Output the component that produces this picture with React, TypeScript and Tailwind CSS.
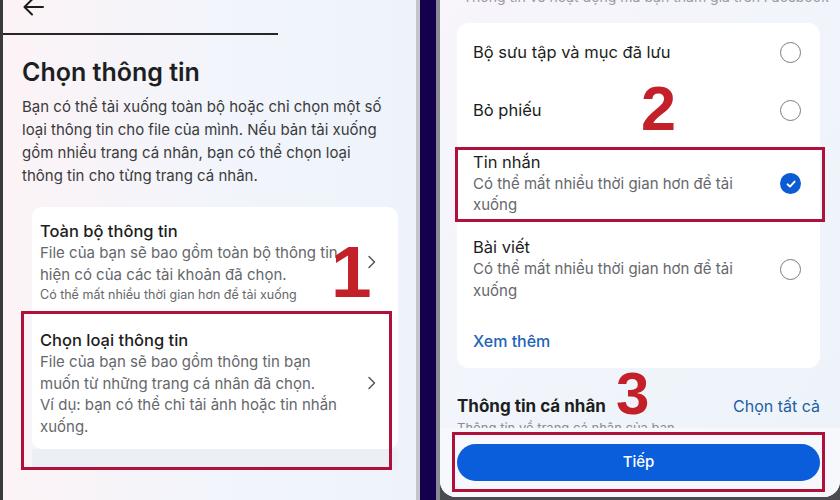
import React from "react";

const Radio = ({ checked }: { checked?: boolean }) =>
  checked ? (
    <div className="flex h-[21px] w-[21px] shrink-0 items-center justify-center rounded-full bg-[#0b5bd3]">
      <svg width="12" height="12" viewBox="0 0 12 12" fill="none">
        <path d="M2.5 6.3 L5 8.6 L9.6 3.6" stroke="white" strokeWidth="1.9" strokeLinecap="round" strokeLinejoin="round" />
      </svg>
    </div>
  ) : (
    <div className="h-[21px] w-[21px] shrink-0 rounded-full border-[1.6px] border-[#7c7c7c] bg-white" />
  );

const Chevron = () => (
  <svg width="10" height="16" viewBox="0 0 10 16" fill="none" className="shrink-0">
    <path d="M2 2.5 L7.5 8 L2 13.5" stroke="#555" strokeWidth="1.5" strokeLinecap="round" strokeLinejoin="round" />
  </svg>
);

function LeftScreen() {
  return (
    <div className="flex h-[500px] w-[420px] shrink-0 flex-col border-l-[3px] border-r-4 border-l-[#3a3a3a] border-r-[#c3c5cc] bg-gradient-to-r from-[#fcf3f6] via-[#f2f5fb] to-[#eef3fb]">
      <div className="h-[33px] pl-[18px]">
        <svg width="24" height="22" viewBox="0 0 24 22" fill="none" className="-mt-[4px]">
          <path d="M22 11 H4 M11 3.5 L3.5 11 L11 18.5" stroke="#1c1c1c" strokeWidth="2" strokeLinecap="round" strokeLinejoin="round" />
        </svg>
      </div>
      <div className="h-[2px] w-[275px] bg-[#262626]" />

      <h1 className="mt-[22px] pl-[19px] text-[25px] font-semibold leading-[30px] text-[#1c1e21]">Chọn thông tin</h1>
      <p className="mt-[8px] pl-[19px] text-[15px] leading-[23px] text-[#3a3b3c]">
        Bạn có thể tải xuống toàn bộ hoặc chỉ chọn một số
        <br />
        loại thông tin cho file của mình. Nếu bản tải xuống
        <br />
        gồm nhiều trang cá nhân, bạn có thể chọn loại
        <br />
        thông tin cho từng trang cá nhân.
      </p>

      <div className="ml-[29px] mt-[20px] w-[366px] rounded-[10px] bg-white px-[8px] pb-[12px] pt-[13px]">
        <div className="flex items-center justify-between pr-[13px]">
          <div>
            <div className="text-[16.5px] font-medium leading-[22px] text-[#1c1e21]">Toàn bộ thông tin</div>
            <div className="text-[15px] leading-[22px] text-[#65676b]">
              File của bạn sẽ bao gồm toàn bộ thông tin
              <br />
              hiện có của các tài khoản đã chọn.
            </div>
            <div className="text-[12.5px] leading-[18px] text-[#65676b]">Có thể mất nhiều thời gian hơn để tải xuống</div>
          </div>
          <Chevron />
        </div>
        <div className="mt-[25px] flex items-center justify-between pr-[13px]">
          <div>
            <div className="text-[16.5px] font-medium leading-[22px] text-[#1c1e21]">Chọn loại thông tin</div>
            <div className="text-[15px] leading-[21.5px] text-[#65676b]">
              File của bạn sẽ bao gồm thông tin bạn
              <br />
              muốn từ những trang cá nhân đã chọn.
              <br />
              Ví dụ: bạn có thể chỉ tải ảnh hoặc tin nhắn
              <br />
              xuống.
            </div>
          </div>
          <Chevron />
        </div>
      </div>
      <div className="ml-[29px] h-[20px] w-[366px] bg-[#eceff5]" />
    </div>
  );
}

function RightScreen() {
  return (
    <div className="h-[500px] w-[404px] shrink-0 border-l-4 border-l-[#8a8a92] bg-[#4a4a50]">
      <div className="flex h-[497px] flex-col overflow-hidden rounded-b-[16px] bg-gradient-to-br from-[#f8f5fb] via-[#f1f5fb] to-[#ecf3f8]">
        <div className="h-[23px] overflow-hidden pl-[23px]">
          <div className="-mt-[13px] text-[14px] leading-[20px] text-[#9a9ca1]">Thông tin về hoạt động mà bạn tham gia trên Facebook</div>
        </div>

        <div className="ml-[17px] w-[363px] rounded-[12px] bg-white pl-[16px] pr-[19px] pb-[16px]">
          <div className="flex h-[58px] items-center justify-between">
            <span className="text-[16.5px] leading-[22px] text-[#1c1e21]">Bộ sưu tập và mục đã lưu</span>
            <Radio />
          </div>
          <div className="flex h-[58px] items-center justify-between">
            <span className="text-[16.5px] leading-[22px] text-[#1c1e21]">Bỏ phiếu</span>
            <Radio />
          </div>
          <div className="flex items-center justify-between pt-[13px]">
            <div>
              <div className="text-[16.5px] leading-[21px] text-[#1c1e21]">Tin nhắn</div>
              <div className="text-[15px] leading-[21px] text-[#65676b]">
                Có thể mất nhiều thời gian hơn để tải
                <br />
                xuống
              </div>
            </div>
            <Radio checked />
          </div>
          <div className="mt-[21px] flex items-center justify-between">
            <div>
              <div className="text-[16.5px] leading-[22px] text-[#1c1e21]">Bài viết</div>
              <div className="text-[15px] leading-[22px] text-[#65676b]">
                Có thể mất nhiều thời gian hơn để tải
                <br />
                xuống
              </div>
            </div>
            <Radio />
          </div>
          <div className="mt-[28px] text-[16px] font-medium leading-[22px] text-[#1d64b8]">Xem thêm</div>
        </div>

        <div className="mt-[26px] flex items-center justify-between px-[17px] pr-[20px]">
          <span className="text-[17px] font-bold leading-[24px] text-[#1c1e21]">Thông tin cá nhân</span>
          <span className="text-[16px] leading-[24px] text-[#1d5fa6]">Chọn tất cả</span>
        </div>
        <div className="h-[10px] overflow-hidden pl-[17px]">
          <div className="text-[13px] leading-[20px] text-[#8a8d91]">Thông tin về trang cá nhân của bạn</div>
        </div>

        <div className="flex-1 bg-[#f6f8fb] px-[17px] pr-[20px] pt-[16px]">
          <button className="flex h-[37px] w-full items-center justify-center rounded-full bg-[#0a5ddb] text-[15px] font-medium text-white">
            Tiếp
          </button>
        </div>
      </div>
    </div>
  );
}

export default function App() {
  return (
    <div className="relative flex h-[500px] w-[840px] overflow-hidden bg-[#14014d] font-['Inter','Noto_Sans',sans-serif]">
      <LeftScreen />
      <div className="w-[16px] shrink-0 bg-[#14014d]" />
      <RightScreen />

      {/* annotations */}
      <div className="absolute left-[21px] top-[311px] h-[159px] w-[371px] border-[3px] border-[#b0113b]" />
      <div className="absolute left-[455px] top-[147px] h-[75px] w-[370px] border-[3px] border-[#b0113b]" />
      <div className="absolute left-[452px] top-[432px] h-[60px] w-[373px] border-[3px] border-[#b0113b]" />

      <div className="absolute left-[331px] top-[235px] font-['Liberation_Sans',sans-serif] text-[73px] font-bold leading-none text-[#c42029]">1</div>
      <div className="absolute left-[641px] top-[77px] font-['Liberation_Sans',sans-serif] text-[63px] font-bold leading-none text-[#c42029]">2</div>
      <div className="absolute left-[616px] top-[364px] font-['Liberation_Sans',sans-serif] text-[60px] font-bold leading-none text-[#c42029]">3</div>
    </div>
  );
}
